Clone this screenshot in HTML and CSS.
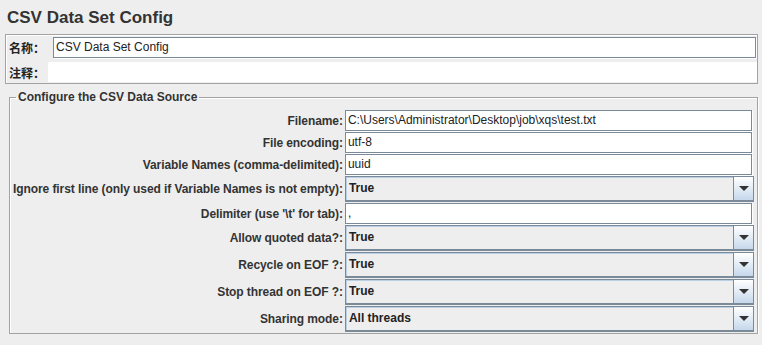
FILE: index.html
```html
<!DOCTYPE html>
<html lang="zh">
<head>
    <meta charset="UTF-8">
    <title>CSV Data Set Config</title>
    <link rel="stylesheet" href="styles.css">
</head>
<body>

    <h1 class="title">CSV Data Set Config</h1>

    <div class="name-panel">
        <div class="name-row">
            <label class="cjk-label">名称：</label>
            <div class="text-field name-field">CSV Data Set Config</div>
        </div>
        <div class="comment-row">
            <label class="cjk-label">注释：</label>
            <div class="comment-area"></div>
        </div>
    </div>

    <fieldset class="source">
        <legend>Configure the CSV Data Source</legend>
        <div class="form-grid">
            <label>Filename:</label>
            <div class="text-field">C:\Users\Administrator\Desktop\job\xqs\test.txt</div>

            <label>File encoding:</label>
            <div class="text-field">utf-8</div>

            <label>Variable Names (comma-delimited):</label>
            <div class="text-field">uuid</div>

            <label>Ignore first line (only used if Variable Names is not empty):</label>
            <div class="combo"><span class="combo-value">True</span><span class="combo-arrow"></span></div>

            <label>Delimiter (use '\t' for tab):</label>
            <div class="text-field">,</div>

            <label>Allow quoted data?:</label>
            <div class="combo"><span class="combo-value">True</span><span class="combo-arrow"></span></div>

            <label>Recycle on EOF ?:</label>
            <div class="combo"><span class="combo-value">True</span><span class="combo-arrow"></span></div>

            <label>Stop thread on EOF ?:</label>
            <div class="combo"><span class="combo-value">True</span><span class="combo-arrow"></span></div>

            <label>Sharing mode:</label>
            <div class="combo"><span class="combo-value">All threads</span><span class="combo-arrow"></span></div>
        </div>
    </fieldset>

</body>
</html>
```

FILE: styles.css
```css
body {
    font-family: 'Liberation Sans', Arial, sans-serif;
    font-size: 12px;
    background-color: #eeeeee;
    color: #333333;
    margin: 0;
    padding: 0;
}

.title {
    font-size: 17px;
    font-weight: bold;
    line-height: 18px;
    color: #333333;
    margin: 0;
    padding: 9px 0 0 7px;
}

/* name / comment box */
.name-panel {
    margin: 7px 4px 0 5px;
    border: 1px solid #a3a3a3;
    box-shadow: inset 1px 1px 0 #ffffff;
    padding: 2px 0 1px 0;
}

.name-row,
.comment-row {
    display: flex;
    align-items: center;
}

.cjk-label {
    font-family: 'Noto Sans CJK SC', 'Liberation Sans', sans-serif;
    font-weight: bold;
    font-size: 12px;
    color: #222;
    padding-left: 3px;
    width: 34px;
    white-space: nowrap;
}

.name-field {
    margin-left: 10px;
    margin-right: 1px;
    flex: 1;
}

.comment-row {
    margin-top: 4px;
}

.comment-area {
    flex: 1;
    height: 20px;
    margin-left: 5px;
    background: #ffffff;
}

/* text inputs */
.text-field {
    box-sizing: border-box;
    height: 21px;
    background: #ffffff;
    border: 1px solid #7a8a99;
    box-shadow: inset 1px 1px 0 #ffffff, 1px 1px 0 #ffffff;
    padding: 0 2px;
    line-height: 19px;
    color: #222;
    white-space: nowrap;
    overflow: hidden;
}

/* data source group */
.source {
    margin: 6px 4px 0 9px;
    padding: 6px 3px 1px 3px;
    border: 1px solid #a3a3a3;
    box-shadow: inset 1px 1px 0 #ffffff, 1px 1px 0 #ffffff;
}

.source legend {
    font-weight: bold;
    color: #333;
    padding: 0 2px;
    margin-left: 3px;
    line-height: 14px;
}

.form-grid {
    display: grid;
    grid-template-columns: auto 1fr;
    column-gap: 2px;
    row-gap: 1px;
    align-items: center;
}

.form-grid label {
    font-weight: bold;
    text-align: right;
    white-space: nowrap;
    letter-spacing: -0.08px;
    color: #333;
}

.form-grid .text-field {
    margin-right: 2px;
}

/* combo boxes */
.combo {
    box-sizing: border-box;
    height: 26px;
    display: flex;
    background: #eeeeee;
    border: 1px solid #7a8a99;
    border-bottom-width: 2px;
    box-shadow: inset 1px 1px 0 #b8cfe5;
}

.combo-value {
    flex: 1;
    font-weight: bold;
    color: #222;
    padding-left: 3px;
    line-height: 23px;
}

.combo-arrow {
    width: 19px;
    border-left: 1px solid #7a8a99;
    background: linear-gradient(#ffffff, #c6d8ec);
    display: flex;
    align-items: center;
    justify-content: center;
}

.combo-arrow::after {
    content: "";
    border-left: 5px solid transparent;
    border-right: 5px solid transparent;
    border-top: 5px solid #333333;
}
```
